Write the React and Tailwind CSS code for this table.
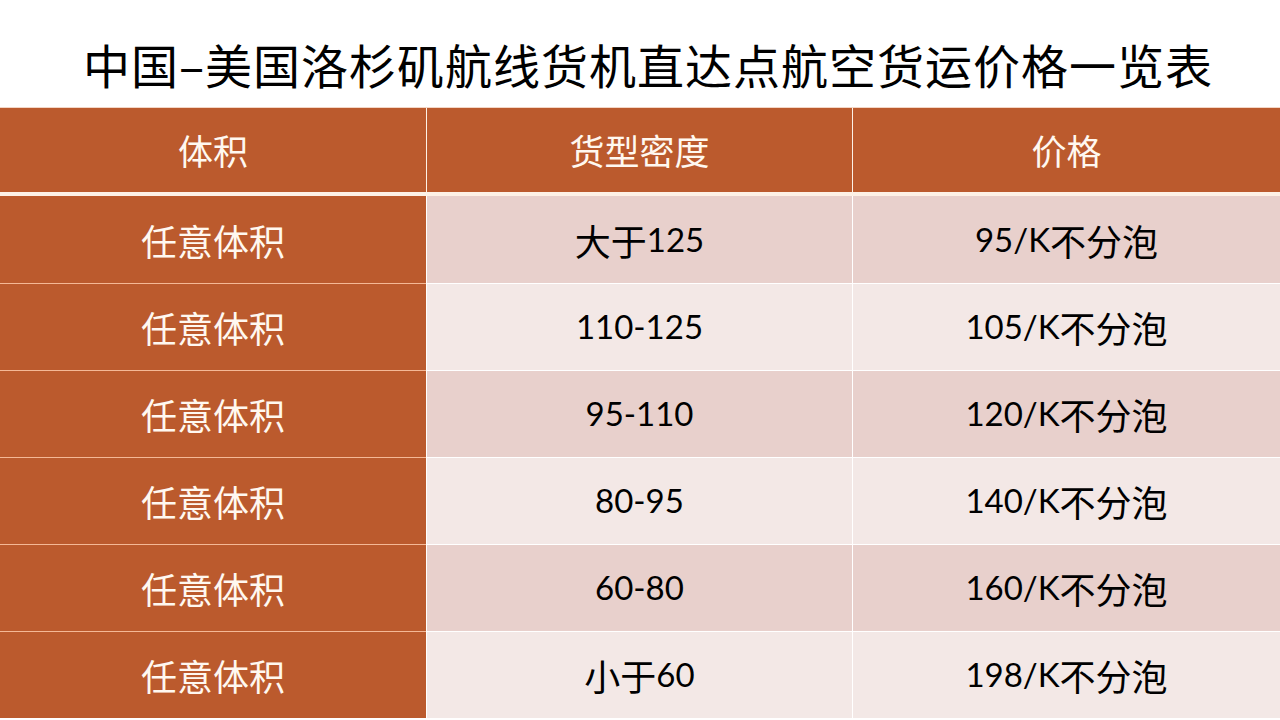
const rows = [
	{ size: "任意体积", density: "大于125", price: "95/K不分泡" },
	{ size: "任意体积", density: "110-125", price: "105/K不分泡" },
	{ size: "任意体积", density: "95-110", price: "120/K不分泡" },
	{ size: "任意体积", density: "80-95", price: "140/K不分泡" },
	{ size: "任意体积", density: "60-80", price: "160/K不分泡" },
	{ size: "任意体积", density: "小于60", price: "198/K不分泡" },
]

// latin runs get a narrower humanist face, CJK keeps the CJK font
function Mixed({ text }) {
	const parts = text.match(/[\x00-\x7f]+|[^\x00-\x7f]+/g) || []
	return (
		<>
			{parts.map((p, i) =>
				/^[\x00-\x7f]+$/.test(p)
					? <span key={i} className="font-['Lato',sans-serif] text-[33px]">{p}</span>
					: <span key={i}>{p}</span>
			)}
		</>
	)
}

export default function App() {
	return (
		<div className="w-[1280px] h-[720px] bg-white overflow-hidden flex flex-col font-['Noto_Sans_CJK_SC','Noto_Sans',sans-serif]">
			<div className="h-[107px] flex items-center justify-center pl-[16px] pt-[20px]">
				<h1 className="text-[47px] leading-none text-black tracking-[1px]">中国–美国洛杉矶航线货机直达点航空货运价格一览表</h1>
			</div>

			<div className="border-t border-[#f3d6c6]">
				<div className="grid grid-cols-[426px_426px_1fr] h-[88px] bg-[#bb5a2d] text-[#fff8f0] text-[35px] border-b-[4px] border-[#fdf1e6]">
					<div className="flex items-center justify-center">体积</div>
					<div className="flex items-center justify-center border-l border-[#fdf1e6]">货型密度</div>
					<div className="flex items-center justify-center border-l border-[#fdf1e6]">价格</div>
				</div>

				{rows.map((r, i) =>
					<div key={i} className={`grid grid-cols-[426px_426px_1fr] h-[87px] text-[36px] ${i % 2 === 0 ? "bg-[#e8d0cc]" : "bg-[#f3e8e6]"}`}>
						<div className={`flex items-center justify-center bg-[#bb5a2d] text-[#fff8f0] ${i > 0 ? "border-t border-[#f4b896]" : ""}`}>
							{r.size}
						</div>
						<div className={`flex items-center justify-center text-black border-l border-white ${i > 0 ? "border-t" : ""}`}>
							<Mixed text={r.density} />
						</div>
						<div className={`flex items-center justify-center text-black border-l border-white ${i > 0 ? "border-t" : ""}`}>
							<Mixed text={r.price} />
						</div>
					</div>
				)}
			</div>
		</div>
	)
}
